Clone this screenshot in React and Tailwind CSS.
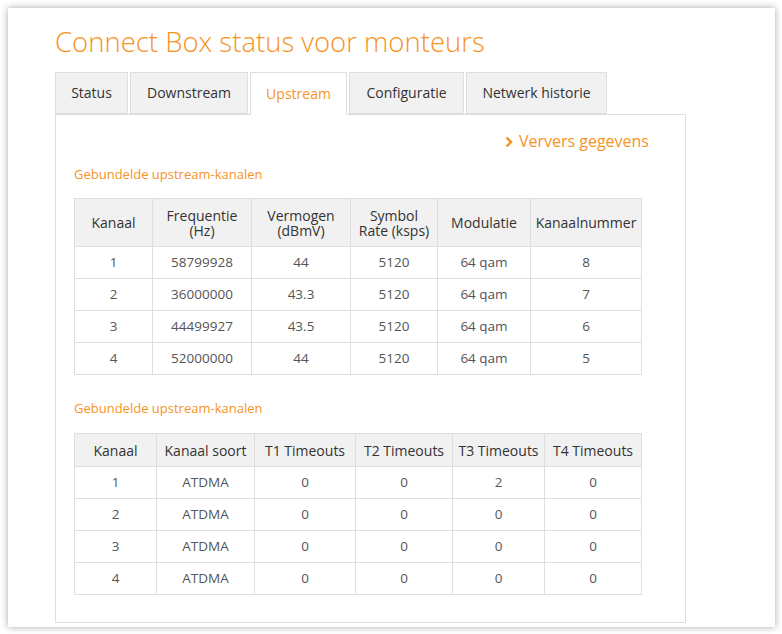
const bundled = [
  ['1', '58799928', '44', '5120', '64 qam', '8'],
  ['2', '36000000', '43.3', '5120', '64 qam', '7'],
  ['3', '44499927', '43.5', '5120', '64 qam', '6'],
  ['4', '52000000', '44', '5120', '64 qam', '5'],
];

const timeouts = [
  ['1', 'ATDMA', '0', '0', '2', '0'],
  ['2', 'ATDMA', '0', '0', '0', '0'],
  ['3', 'ATDMA', '0', '0', '0', '0'],
  ['4', 'ATDMA', '0', '0', '0', '0'],
];

const tabs = [
  { label: 'Status', w: 'w-[73px]' },
  { label: 'Downstream', w: 'w-[118px]' },
  { label: 'Upstream', w: 'w-[97px]', active: true },
  { label: 'Configuratie', w: 'w-[115px]' },
  { label: 'Netwerk historie', w: 'w-[141px]' },
];

const DataTable = ({ cols, head, rows, headH }) => (
  <table className="w-[567px] table-fixed border-collapse text-center text-[13.5px]">
    <colgroup>
      {cols.map((c, i) => (
        <col key={i} className={c} />
      ))}
    </colgroup>
    <thead>
      <tr className={headH}>
        {head.map((h, i) => (
          <th key={i} className="border border-[#dedede] bg-[#f1f1f1] px-1 text-[14px] font-normal leading-[15px] text-[#333]">
            {h}
          </th>
        ))}
      </tr>
    </thead>
    <tbody>
      {rows.map((r, i) => (
        <tr key={i} className="h-[32px]">
          {r.map((v, j) => (
            <td key={j} className="border border-[#dedede] text-[#555]">
              {v}
            </td>
          ))}
        </tr>
      ))}
    </tbody>
  </table>
);

export default function App() {
  return (
    <div className="min-h-[634px] bg-white p-2" style={{ fontFamily: '"Open Sans", sans-serif' }}>
      <div className="w-[767px] bg-white pb-1 pl-[47px] pt-[14px] shadow-[0_0_7px_rgba(0,0,0,0.35)]">
        <h1 className="h-[40px] text-[27.5px] font-light leading-[40px] text-[#f7931e]">
          Connect Box status voor monteurs
        </h1>
        <div className="mt-[10px] flex gap-[2px]">
          {tabs.map((t) => (
            <div
              key={t.label}
              className={`${t.w} relative z-10 flex items-center justify-center border border-[#dedede] pb-px text-[14px] ${
                t.active ? 'h-[43px] border-b-white bg-white text-[#f7931e]' : 'h-[42px] bg-[#f1f1f1] text-[#333]'
              }`}
            >
              {t.label}
            </div>
          ))}
        </div>
        <div className="-mt-px w-[631px] border border-[#dedede] px-[18px] pb-[27px] pt-[15px]">
          <div className="flex h-[22px] items-center justify-end pr-[18px] text-[16px] text-[#f7931e]">
            <svg width="8" height="12" viewBox="0 0 8 12" className="mr-[6px] mt-px">
              <path d="M1.5 1.5 L6 6 L1.5 10.5" fill="none" stroke="#f7931e" strokeWidth="2.4" />
            </svg>
            Ververs gegevens
          </div>
          <h2 className="mt-[14px] h-[16px] text-[13px] font-medium leading-[16px] text-[#f7931e]">
            Gebundelde upstream-kanalen
          </h2>
          <div className="mt-[16px]">
            <DataTable
              headH="h-[48px]"
              cols={['w-[78px]', 'w-[99px]', 'w-[99px]', 'w-[87px]', 'w-[93px]', 'w-[111px]']}
              head={[
                'Kanaal',
                <>Frequentie<br />(Hz)</>,
                <>Vermogen<br />(dBmV)</>,
                <>Symbol<br />Rate (ksps)</>,
                'Modulatie',
                'Kanaalnummer',
              ]}
              rows={bundled}
            />
          </div>
          <h2 className="mt-[25px] h-[16px] text-[13px] font-medium leading-[16px] text-[#f7931e]">
            Gebundelde upstream-kanalen
          </h2>
          <div className="mt-[17px]">
            <DataTable
              headH="h-[33px]"
              cols={['w-[82px]', 'w-[98px]', 'w-[101px]', 'w-[97px]', 'w-[92px]', 'w-[97px]']}
              head={['Kanaal', 'Kanaal soort', 'T1 Timeouts', 'T2 Timeouts', 'T3 Timeouts', 'T4 Timeouts']}
              rows={timeouts}
            />
          </div>
        </div>
      </div>
    </div>
  );
}
